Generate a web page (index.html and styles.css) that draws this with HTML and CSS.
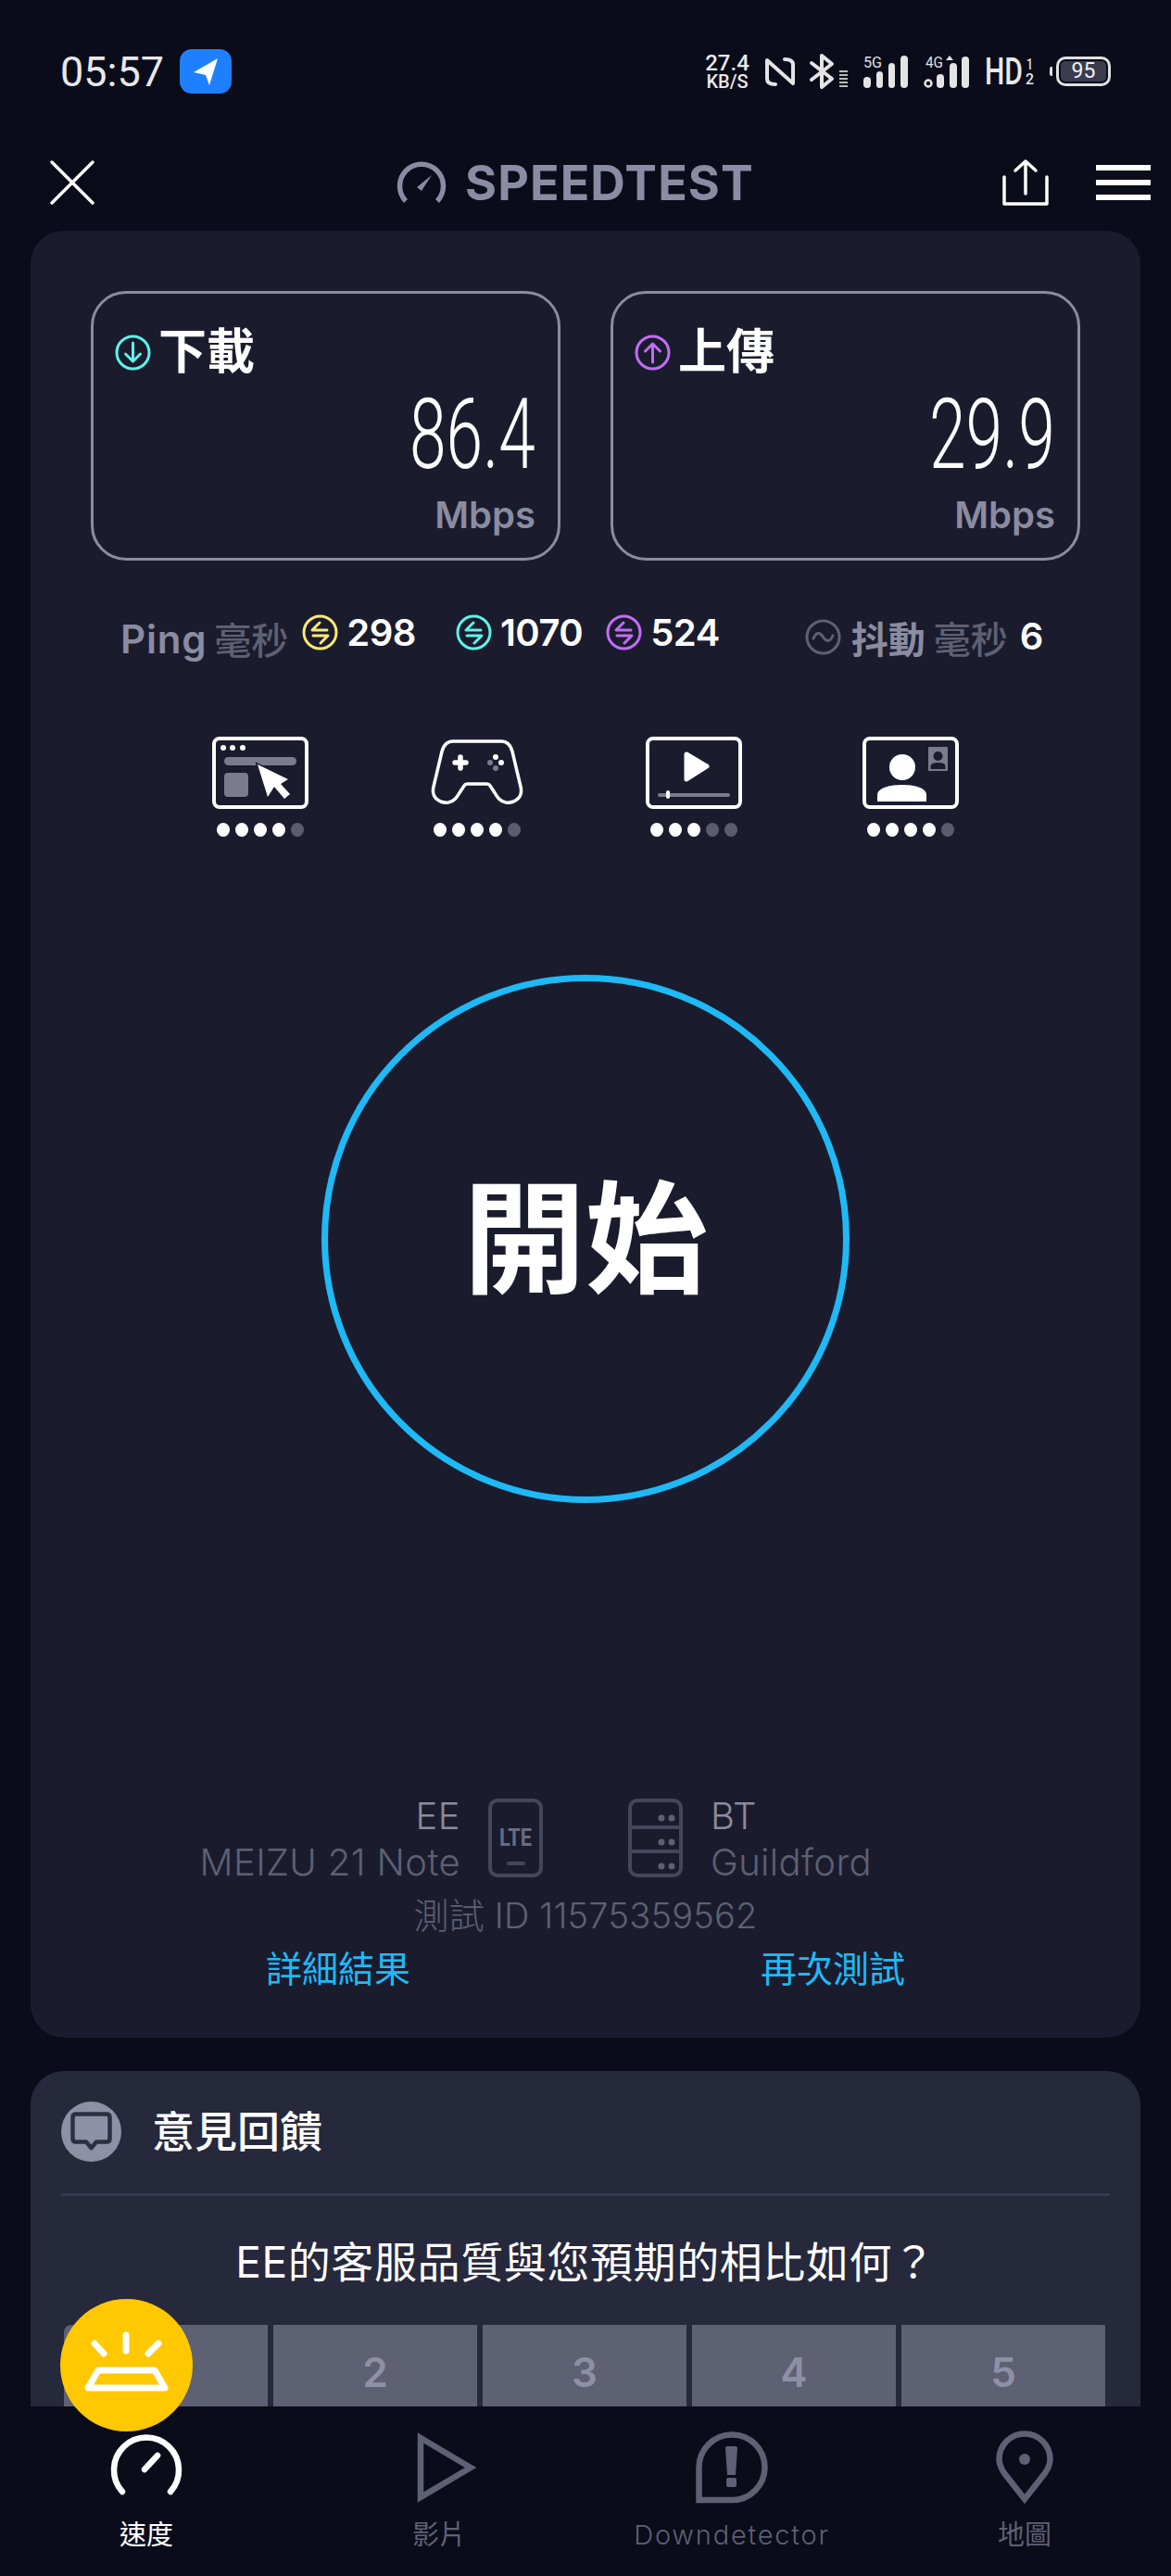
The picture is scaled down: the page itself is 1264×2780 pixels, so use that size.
FILE: index.html
```html
<!DOCTYPE html>
<html lang="zh-Hant">
<head>
    <meta charset="UTF-8">
    <meta name="viewport" content="width=device-width, initial-scale=1.0">
    <title>Speedtest</title>
    <link rel="stylesheet" href="styles.css">
</head>
<body>
    <div class="app">
        <div class="statusbar">
            <span class="clock">05:57</span>
            <span class="loc-badge">
                <svg width="30" height="32" viewBox="0 0 30 32"><path class="fill-white" d="M28 2 L2 17 L15 20 L19 31 Z"/></svg>
            </span>
            <div class="status-icons">
                <div class="net-speed"><span>27.4</span><span class="net-unit">KB/S</span></div>
                <svg width="32" height="32" viewBox="0 0 32 32"><path class="line-status" d="M11 30 Q2 30 2 24 V4 L30 29 V9 Q30 3 21 3"/></svg>
                <svg width="41" height="38" viewBox="0 0 41 38">
                    <path class="line-status" d="M2 10 L24 27 L13 36 V2 L24 11 L2 28"/>
                    <path class="line-bars" d="M32 19 H41 M32 23 H41 M32 27 H41 M32 31 H41 M32 35 H41"/>
                </svg>
                <svg width="48" height="35" viewBox="0 0 48 35">
                    <text class="net-tag" x="0" y="13" textLength="20" lengthAdjust="spacingAndGlyphs">5G</text>
                    <rect class="fill-status" x="0" y="23" width="8" height="12" rx="4"/>
                    <rect class="fill-status" x="14" y="17" width="7" height="18" rx="3.5"/>
                    <rect class="fill-status" x="27" y="8" width="7" height="27" rx="3.5"/>
                    <rect class="fill-status" x="40" y="0" width="8" height="35" rx="4"/>
                </svg>
                <svg width="50" height="35" viewBox="0 0 50 35">
                    <text class="net-tag" x="2" y="13" textLength="19" lengthAdjust="spacingAndGlyphs">4G</text>
                    <circle class="line-thin" cx="5" cy="30" r="3.5"/>
                    <rect class="fill-status" x="14" y="20" width="8" height="15" rx="4"/>
                    <path class="fill-status" d="M28 0 L32 5 H24 Z"/>
                    <rect class="fill-status" x="28" y="8" width="8" height="27" rx="4"/>
                    <rect class="fill-status" x="41" y="1" width="8" height="34" rx="4"/>
                </svg>
                <svg width="53" height="32" viewBox="0 0 53 32">
                    <text class="hd-text" x="0" y="30" textLength="41" lengthAdjust="spacingAndGlyphs">HD</text>
                    <text class="hd-small" x="45" y="14" textLength="7" lengthAdjust="spacingAndGlyphs">1</text>
                    <text class="hd-small" x="44" y="30" textLength="9" lengthAdjust="spacingAndGlyphs">2</text>
                </svg>
                <div class="battery"><span class="battery-tip"></span><span class="battery-body">95</span></div>
            </div>
        </div>

        <div class="topbar">
            <svg class="close-icon" width="48" height="48" viewBox="0 0 48 48"><path class="line-top" d="M2 2 L46 46 M46 2 L2 46"/></svg>
            <div class="logo">
                <svg width="52" height="44" viewBox="0 0 52 44">
                    <path class="line-logo" d="M9 42 A23.5 23.5 0 1 1 43 42"/>
                    <path class="fill-logo" d="M37 14 L26 31 L21 27 Z"/>
                </svg>
                <span>SPEEDTEST</span>
            </div>
            <svg class="share-icon" width="50" height="50" viewBox="0 0 50 50">
                <path class="line-top" d="M2 19 V48 H48 V19 M25 37 V2 M14 12 L25 2 L36 12"/>
            </svg>
            <div class="menu-icon"><span></span><span></span><span></span></div>
        </div>

        <div class="content">
            <section class="result-card">
                <div class="stat-row">
                    <div class="stat">
                        <div class="stat-head">
                            <svg width="39" height="39" viewBox="0 0 39 39">
                                <circle class="line-teal" cx="19.5" cy="19.5" r="17.5"/>
                                <path class="line-teal" d="M19.5 9 V29 M11.5 21 L19.5 29 L27.5 21"/>
                            </svg>
                            <span>下載</span>
                        </div>
                        <div class="stat-value"><span>86.4</span></div>
                        <div class="stat-unit">Mbps</div>
                    </div>
                    <div class="stat">
                        <div class="stat-head">
                            <svg width="39" height="39" viewBox="0 0 39 39">
                                <circle class="line-purple" cx="19.5" cy="19.5" r="17.5"/>
                                <path class="line-purple" d="M19.5 30 V10 M11.5 18 L19.5 10 L27.5 18"/>
                            </svg>
                            <span>上傳</span>
                        </div>
                        <div class="stat-value"><span>29.9</span></div>
                        <div class="stat-unit">Mbps</div>
                    </div>
                </div>

                <div class="ping-row">
                    <span class="ping-label">Ping</span>
                    <span class="ping-unit">毫秒</span>
                    <svg class="ping-icon ping-first" width="39" height="39" viewBox="0 0 39 39">
                        <circle class="line-yellow" cx="19.5" cy="19.5" r="17.5"/>
                        <path class="line-yellow" d="M19 9 L11 17 H27 M12 23 H28 L20 31"/>
                    </svg>
                    <span class="ping-num">298</span>
                    <svg class="ping-icon ping-second" width="39" height="39" viewBox="0 0 39 39">
                        <circle class="line-teal" cx="19.5" cy="19.5" r="17.5"/>
                        <path class="line-teal" d="M19 9 L11 17 H27 M12 23 H28 L20 31"/>
                    </svg>
                    <span class="ping-num">1070</span>
                    <svg class="ping-icon ping-third" width="39" height="39" viewBox="0 0 39 39">
                        <circle class="line-purple" cx="19.5" cy="19.5" r="17.5"/>
                        <path class="line-purple" d="M19 9 L11 17 H27 M12 23 H28 L20 31"/>
                    </svg>
                    <span class="ping-num">524</span>
                    <svg class="jitter-icon" width="39" height="39" viewBox="0 0 39 39">
                        <circle class="line-dim" cx="19.5" cy="19.5" r="17.5"/>
                        <path class="line-dim" d="M9 21 C12 14 16 14 19.5 19.5 C23 25 27 25 30 18"/>
                    </svg>
                    <span class="jitter-label">抖動</span>
                    <span class="jitter-unit">毫秒</span>
                    <span class="ping-num jitter-num">6</span>
                </div>

                <div class="services">
                    <div class="service">
                        <svg width="104" height="78" viewBox="0 0 104 78">
                            <rect class="line-service" x="2" y="2" width="100" height="74" rx="6"/>
                            <circle class="fill-white" cx="12" cy="12" r="3"/>
                            <circle class="fill-white" cx="22" cy="12" r="3"/>
                            <circle class="fill-white" cx="33" cy="12" r="3"/>
                            <rect class="fill-soft" x="13" y="22" width="78" height="9" rx="4.5"/>
                            <rect class="fill-soft" x="13" y="39" width="26" height="26" rx="4"/>
                            <path class="cursor" d="M49 30 L60 65 L67 54 L78 67 L84 62 L74 51 L82 46 Z"/>
                        </svg>
                        <div class="dots"><i class="on"></i><i class="on"></i><i class="on"></i><i class="on"></i><i></i></div>
                    </div>
                    <div class="service">
                        <svg width="104" height="78" viewBox="-2 -4 104 78">
                            <path class="line-pad" d="M24 1 H76 Q85 1 88 12 L97 50 C100 62 90 68 81 67 C74 66 71 60 68 55 L64 49 Q63 47 60 47 H40 Q37 47 36 49 L32 55 C29 60 26 66 19 67 C10 68 0 62 3 50 L12 12 Q15 1 24 1 Z"/>
                            <path class="line-dpad" d="M32 18 V30 M26 24 H38"/>
                            <circle class="fill-white" cx="70" cy="18" r="3"/>
                            <circle class="fill-white" cx="76" cy="24" r="3"/>
                            <circle class="fill-soft" cx="64" cy="24" r="3"/>
                            <circle class="fill-soft" cx="70" cy="30" r="3"/>
                        </svg>
                        <div class="dots"><i class="on"></i><i class="on"></i><i class="on"></i><i class="on"></i><i></i></div>
                    </div>
                    <div class="service">
                        <svg width="104" height="78" viewBox="0 0 104 78">
                            <rect class="line-service" x="2" y="2" width="100" height="74" rx="6"/>
                            <path class="play-solid" d="M44 19 V46 L66 32 Z"/>
                            <rect class="fill-soft" x="13" y="61" width="78" height="4" rx="2"/>
                            <rect class="fill-white" x="22" y="58" width="4" height="9" rx="2"/>
                        </svg>
                        <div class="dots"><i class="on"></i><i class="on"></i><i class="on"></i><i></i><i></i></div>
                    </div>
                    <div class="service">
                        <svg width="104" height="78" viewBox="0 0 104 78">
                            <rect class="line-service" x="2" y="2" width="100" height="74" rx="6"/>
                            <ellipse class="fill-white" cx="43" cy="33" rx="14" ry="14"/>
                            <path class="fill-white" d="M16 70 V63 C16 55 30 52 43 52 C56 52 69 55 69 63 V70 Z"/>
                            <rect class="fill-soft" x="71" y="11" width="21" height="26" rx="1"/>
                            <circle class="fill-card" cx="81.5" cy="21" r="5"/>
                            <path class="fill-card" d="M73.5 35 V32 Q73.5 28 81.5 28 Q89.5 28 89.5 32 V35 Z"/>
                        </svg>
                        <div class="dots"><i class="on"></i><i class="on"></i><i class="on"></i><i class="on"></i><i></i></div>
                    </div>
                </div>

                <div class="start-btn">開始</div>

                <div class="server-info">
                    <div class="info-side info-left">
                        <div class="info-text">
                            <div class="info-name">EE</div>
                            <div class="info-sub">MEIZU 21 Note</div>
                        </div>
                        <svg width="59" height="85" viewBox="0 0 59 85">
                            <rect class="line-device" x="2" y="2" width="55" height="81" rx="8"/>
                            <text class="lte-text" x="12" y="51" textLength="35" lengthAdjust="spacingAndGlyphs">LTE</text>
                            <path class="line-device" d="M22 70 H38"/>
                        </svg>
                    </div>
                    <div class="info-side">
                        <svg width="59" height="85" viewBox="0 0 59 85">
                            <rect class="line-device" x="2" y="2" width="55" height="81" rx="8"/>
                            <path class="line-device" d="M2 31 H57 M2 57 H57"/>
                            <circle class="fill-device" cx="36" cy="21" r="3.5"/><circle class="fill-device" cx="47" cy="21" r="3.5"/>
                            <circle class="fill-device" cx="36" cy="47" r="3.5"/><circle class="fill-device" cx="47" cy="47" r="3.5"/>
                            <circle class="fill-device" cx="36" cy="73" r="3.5"/><circle class="fill-device" cx="47" cy="73" r="3.5"/>
                        </svg>
                        <div class="info-text">
                            <div class="info-name">BT</div>
                            <div class="info-sub">Guildford</div>
                        </div>
                    </div>
                </div>
                <div class="test-id">測試 ID 11575359562</div>
                <div class="links">
                    <a>詳細結果</a>
                    <a>再次測試</a>
                </div>
            </section>

            <section class="feedback-card">
                <div class="feedback-head">
                    <span class="feedback-icon">
                        <svg width="45" height="42" viewBox="0 0 45 42">
                            <path class="line-bubble" d="M6 2.5 H39 Q42.5 2.5 42.5 6 V29 Q42.5 32.5 39 32.5 H28 L22.5 39 L17 32.5 H6 Q2.500 32.5 2.500 29 V6 Q2.500 2.500 6 2.500 Z"/>
                        </svg>
                    </span>
                    <span class="feedback-title">意見回饋</span>
                </div>
                <div class="feedback-q">EE的客服品質與您預期的相比如何？</div>
                <div class="rating">
                    <div>1</div><div>2</div><div>3</div><div>4</div><div>5</div>
                </div>
            </section>
        </div>

        <nav class="tabbar">
            <div class="tab tab-active">
                <div class="tab-icon">
                    <svg width="78" height="70" viewBox="0 0 78 70">
                        <path class="line-tab-on" d="M13 65 A35 35 0 1 1 65 65"/>
                        <path class="line-tab-on" d="M37 41 L51 26"/>
                    </svg>
                </div>
                <span>速度</span>
            </div>
            <div class="tab">
                <div class="tab-icon tab-play">
                    <svg width="66" height="78" viewBox="0 0 66 78"><path class="line-tab" d="M4 7 L58 39 L4 71 Z"/></svg>
                </div>
                <span>影片</span>
            </div>
            <div class="tab tab-dd">
                <div class="tab-icon">
                    <svg width="78" height="78" viewBox="0 0 78 78">
                        <path class="line-tab" d="M3.500 74 V39 A35.500 35.500 0 0 1 39 3.500 A35.250 35.250 0 0 1 74.500 39 A35.250 35.250 0 0 1 39 74 Z"/>
                        <path class="fill-tab" d="M32 18 Q32 16 34 16 H43 Q45 16 45 18 L43 47 H34 Z"/>
                        <rect class="fill-tab" x="33" y="50" width="11" height="10" rx="2"/>
                    </svg>
                </div>
                <span>Downdetector</span>
            </div>
            <div class="tab">
                <div class="tab-icon">
                    <svg width="62" height="78" viewBox="0 0 62 78">
                        <path class="line-tab" d="M31 73 L9 45 C5 39 3.500 35 3.500 30 A27.500 27.500 0 0 1 58.500 30 C58.500 35 57 39 53 45 Z"/>
                        <circle class="fill-tab" cx="31" cy="30" r="6"/>
                    </svg>
                </div>
                <span>地圖</span>
            </div>
        </nav>

        <!-- floating tip button over the rating row -->
        <div class="tip-btn">
            <svg width="143" height="143" viewBox="0 0 143 143">
                <path class="line-tip" d="M71 39 V56 M37 48 L47 59 M106 48 L95 59"/>
                <path class="tray" d="M41 77 H102 L113 96 H30 Z"/>
            </svg>
        </div>
    </div>
</body>
</html>
```

FILE: styles.css
```css
* {
    box-sizing: border-box;
}

html, body {
    margin: 0;
    padding: 0;
    background: #0a0c1a;
}

body {
    font-family: Inter, "Noto Sans CJK TC", sans-serif;
    color: #fff;
}

svg {
    display: block;
    flex: none;
    overflow: visible;
}

.app {
    position: relative;
    display: flex;
    flex-direction: column;
    width: 1264px;
    height: 2780px;
    overflow: hidden;
    background: #0a0c1a;
}

/* status bar */
.statusbar {
    display: flex;
    align-items: center;
    height: 48px;
    margin-top: 53px;
    padding-left: 65px;
}

.clock {
    font-family: Roboto, sans-serif;
    font-size: 45px;
    color: #e8e8e8;
    width: 129px;
}

.loc-badge {
    display: flex;
    align-items: center;
    justify-content: center;
    width: 56px;
    height: 48px;
    border-radius: 13px;
    background: #1e80ff;
}

.status-icons {
    display: flex;
    align-items: center;
    justify-content: space-between;
    width: 438px;
    height: 48px;
    margin-left: auto;
    margin-right: 65px;
}

.net-speed {
    display: flex;
    flex-direction: column;
    align-items: center;
    width: 48px;
    font-family: Roboto, sans-serif;
    font-size: 24px;
    font-weight: 500;
    line-height: 21px;
    color: #e8e8e8;
}

.net-unit {
    font-size: 20px;
    line-height: 18px;
}

.net-tag {
    font-family: Roboto, sans-serif;
    font-size: 17px;
    fill: #e0e0e0;
}

.hd-text {
    font-family: Roboto, sans-serif;
    font-size: 40px;
    font-weight: 500;
    fill: #e8e8e8;
}

.hd-small {
    font-family: Roboto, sans-serif;
    font-size: 17px;
    font-weight: 500;
    fill: #e8e8e8;
}

.battery {
    display: flex;
    align-items: center;
    width: 66px;
}

.battery-tip {
    width: 3px;
    height: 10px;
    margin-right: 4px;
    border-radius: 2px 0 0 2px;
    background: #e0e0e0;
}

.battery-body {
    width: 59px;
    height: 32px;
    border: 3px solid #e0e0e0;
    border-radius: 10px;
    box-shadow: inset 0 0 0 2px #0a0c1a;
    background: #3a3c4e;
    font-family: Roboto, sans-serif;
    font-size: 23px;
    line-height: 26px;
    text-align: center;
    color: #f0f0f0;
}

/* top bar */
.topbar {
    display: flex;
    align-items: center;
    height: 50px;
    margin: 71px 0 27px;
    padding: 0 22px 0 54px;
}

.logo {
    display: flex;
    align-items: center;
    gap: 21px;
    margin-left: 327px;
    font-size: 52px;
    font-weight: 700;
    letter-spacing: 1.1px;
    color: #8a8ca3;
}

.share-icon {
    margin-left: auto;
}

.menu-icon {
    display: flex;
    flex-direction: column;
    gap: 9.5px;
    width: 59px;
    margin-left: 51px;
}

.menu-icon span {
    height: 6.500px;
    background: #fff;
}

/* scrolling content */
.content {
    flex: 1;
    min-height: 0;
    overflow: hidden;
    padding: 0 33px;
}

.result-card {
    padding: 65px 65px 50px;
    border-radius: 36px;
    background: #1a1c2e;
}

.stat-row {
    display: grid;
    grid-template-columns: 507px 507px;
    gap: 54px;
}

.stat {
    height: 291px;
    padding: 38px 24px 0 23px;
    border: 3px solid #8a8ca0;
    border-radius: 38px;
}

.stat-head {
    display: flex;
    align-items: center;
    gap: 8px;
    height: 50px;
    font-size: 52px;
    font-weight: 700;
    line-height: 50px;
}

.stat-value {
    height: 100px;
    margin-top: 15px;
    text-align: right;
    font-family: Roboto, sans-serif;
    font-size: 105px;
    font-weight: 300;
    line-height: 100px;
}

.stat-value span {
    display: inline-block;
    transform: scaleX(0.68);
    transform-origin: right center;
}

.stat-unit {
    margin-top: 12px;
    text-align: right;
    font-size: 40px;
    font-weight: 600;
    line-height: 48px;
    color: #8a8ca0;
}

/* ping and jitter */
.ping-row {
    display: flex;
    align-items: center;
    height: 48px;
    margin: 56px -65px 0;
    padding-left: 97px;
    font-size: 40px;
    font-weight: 600;
}

.ping-label {
    margin-top: 8px;
    font-size: 42px;
    letter-spacing: 0.8px;
    color: #8a8ca0;
}

.ping-unit, .jitter-unit {
    margin-top: 8px;
    margin-left: 8px;
    font-weight: 500;
    color: #5e6073;
}

.jitter-label {
    margin-top: 6px;
    margin-left: 11px;
    font-weight: 600;
    color: #8a8ca0;
}

.jitter-unit {
    margin-top: 6px;
    margin-left: 9px;
}

.ping-num {
    margin-top: -6px;
    margin-left: 9px;
    letter-spacing: -0.5px;
}

.jitter-num {
    margin-top: 2px;
    margin-left: 13px;
}

.ping-icon {
    margin-top: -5px;
}

.ping-first {
    margin-left: 15px;
}

.ping-second {
    margin-left: 43px;
}

.ping-third {
    margin-left: 25px;
}

.jitter-icon {
    margin-left: 92px;
    margin-top: 4px;
}

/* experience ratings */
.services {
    display: grid;
    grid-template-columns: repeat(4, 234px);
    justify-content: center;
    margin-top: 86px;
}

.service {
    display: flex;
    flex-direction: column;
    align-items: center;
    gap: 15px;
}

.dots {
    display: flex;
    gap: 6px;
}

.dots i {
    width: 14px;
    height: 15px;
    border-radius: 50%;
    background: #5a5c70;
}

.dots i.on {
    background: #fff;
}

/* start button */
.start-btn {
    display: flex;
    align-items: center;
    justify-content: center;
    width: 570px;
    height: 570px;
    margin: 149px auto 0;
    padding-bottom: 20px;
    border: 7px solid #1fb9f5;
    border-radius: 50%;
    font-size: 132px;
    font-weight: 700;
}

/* carrier and server */
.server-info {
    display: grid;
    grid-template-columns: 1fr 1fr;
    gap: 92px;
    height: 85px;
    margin-top: 319px;
}

.info-side {
    display: flex;
    align-items: flex-start;
    gap: 30px;
}

.info-left {
    justify-content: flex-end;
}

.info-left .info-text {
    text-align: right;
}

.info-text {
    font-size: 40px;
    font-weight: 300;
    letter-spacing: 0.4px;
    line-height: 48px;
    white-space: nowrap;
}

.info-name {
    margin-top: -5px;
    color: #8a8ca0;
}

.info-sub {
    margin-top: 2px;
    color: #5e6073;
}

.lte-text {
    font-family: Roboto, sans-serif;
    font-size: 25px;
    font-weight: 700;
    fill: #6a6c80;
}

.test-id {
    margin-top: 17px;
    text-align: center;
    font-size: 38px;
    font-weight: 300;
    letter-spacing: 0.2px;
    line-height: 48px;
    color: #5e6073;
}

.links {
    display: grid;
    grid-template-columns: 1fr 1fr;
    margin-top: 10px;
    text-align: center;
    font-size: 39px;
    line-height: 48px;
    color: #1fb9f5;
}

/* feedback card */
.feedback-card {
    height: 420px;
    margin-top: 36px;
    padding: 33px 33px 0;
    border-radius: 36px 36px 0 0;
    background: #26283c;
}

.feedback-head {
    display: flex;
    align-items: center;
    gap: 33px;
    height: 102px;
    padding-bottom: 35px;
    border-bottom: 3px solid #383a52;
}

.feedback-icon {
    display: flex;
    align-items: center;
    justify-content: center;
    width: 65px;
    height: 65px;
    border-radius: 50%;
    background: #8e90a6;
}

.feedback-title {
    font-size: 46px;
    font-weight: 500;
    line-height: 65px;
}

.feedback-q {
    margin-top: 41px;
    text-align: center;
    font-size: 46px;
    letter-spacing: 0.6px;
    line-height: 60px;
}

.rating {
    display: grid;
    grid-template-columns: repeat(5, 220px);
    gap: 6px;
    margin: 38px 0 0 3px;
    overflow: hidden;
    border-radius: 8px;
}

.rating div {
    height: 120px;
    padding-top: 20px;
    text-align: center;
    font-size: 44px;
    font-weight: 600;
    line-height: 62px;
    background: #5e6073;
    color: #8e90a6;
}

/* bottom tabs */
.tabbar {
    display: grid;
    grid-template-columns: repeat(4, 316px);
    height: 183px;
    padding-top: 27px;
    background: #0a0c1a;
}

.tab {
    display: flex;
    flex-direction: column;
    align-items: center;
    font-size: 29px;
    line-height: 40px;
    color: #5e6073;
}

.tab-active {
    color: #fff;
}

.tab-icon {
    height: 78px;
    margin-bottom: 14px;
}

.tab-play {
    margin-left: 18px;
}

.tab-dd {
    font-weight: 300;
    letter-spacing: 1.8px;
}

.tip-btn {
    position: absolute;
    left: 65px;
    top: 2481px;
    width: 143px;
    height: 143px;
    border-radius: 50%;
    background: #ffc800;
}

/* svg strokes and fills */
.line-status, .line-top, .line-logo, .line-teal, .line-purple, .line-yellow, .line-dim,
.line-service, .line-pad, .line-dpad, .line-device, .line-bubble, .line-tab, .line-tab-on,
.line-tip, .line-thin, .line-bars {
    fill: none;
    stroke-linecap: round;
    stroke-linejoin: round;
}

.line-status { stroke: #e4e4e4; stroke-width: 4; }
.line-bars { stroke: #bbb; stroke-width: 2; stroke-linecap: butt; }
.line-thin { stroke: #e4e4e4; stroke-width: 2.500; }
.line-top { stroke: #fff; stroke-width: 3.500; }
.line-logo { stroke: #8a8ca3; stroke-width: 5.500; stroke-linecap: butt; }
.line-teal { stroke: #5ef2e8; stroke-width: 3; }
.line-purple { stroke: #c46cf5; stroke-width: 3; }
.line-yellow { stroke: #ffe873; stroke-width: 3; }
.line-dim { stroke: #5e6073; stroke-width: 3; }
.line-service { stroke: #fff; stroke-width: 4; }
.line-pad { stroke: #fff; stroke-width: 3.500; }
.line-dpad { stroke: #fff; stroke-width: 5.500; }
.line-device { stroke: #44465c; stroke-width: 4; }
.line-bubble { stroke: #2c2e42; stroke-width: 4.500; }
.line-tab { stroke: #5e6073; stroke-width: 6.500; stroke-linecap: butt; stroke-linejoin: miter; }
.line-tab-on { stroke: #fff; stroke-width: 6.500; }
.line-tip { stroke: #fff; stroke-width: 7; }

.fill-white { fill: #fff; }
.fill-status { fill: #e4e4e4; }
.fill-logo { fill: #8a8ca3; }
.fill-soft { fill: #7a7c8e; }
.fill-card { fill: #1a1c2e; }
.fill-device { fill: #5e6073; }
.fill-tab { fill: #5e6073; }

.cursor {
    fill: #fff;
    stroke: #1a1c2e;
    stroke-width: 3;
    paint-order: stroke;
}

.play-solid {
    fill: #fff;
    stroke: #fff;
    stroke-width: 5;
    stroke-linejoin: round;
}

.tray {
    fill: none;
    stroke: #fff;
    stroke-width: 7;
    stroke-linejoin: round;
}
```
